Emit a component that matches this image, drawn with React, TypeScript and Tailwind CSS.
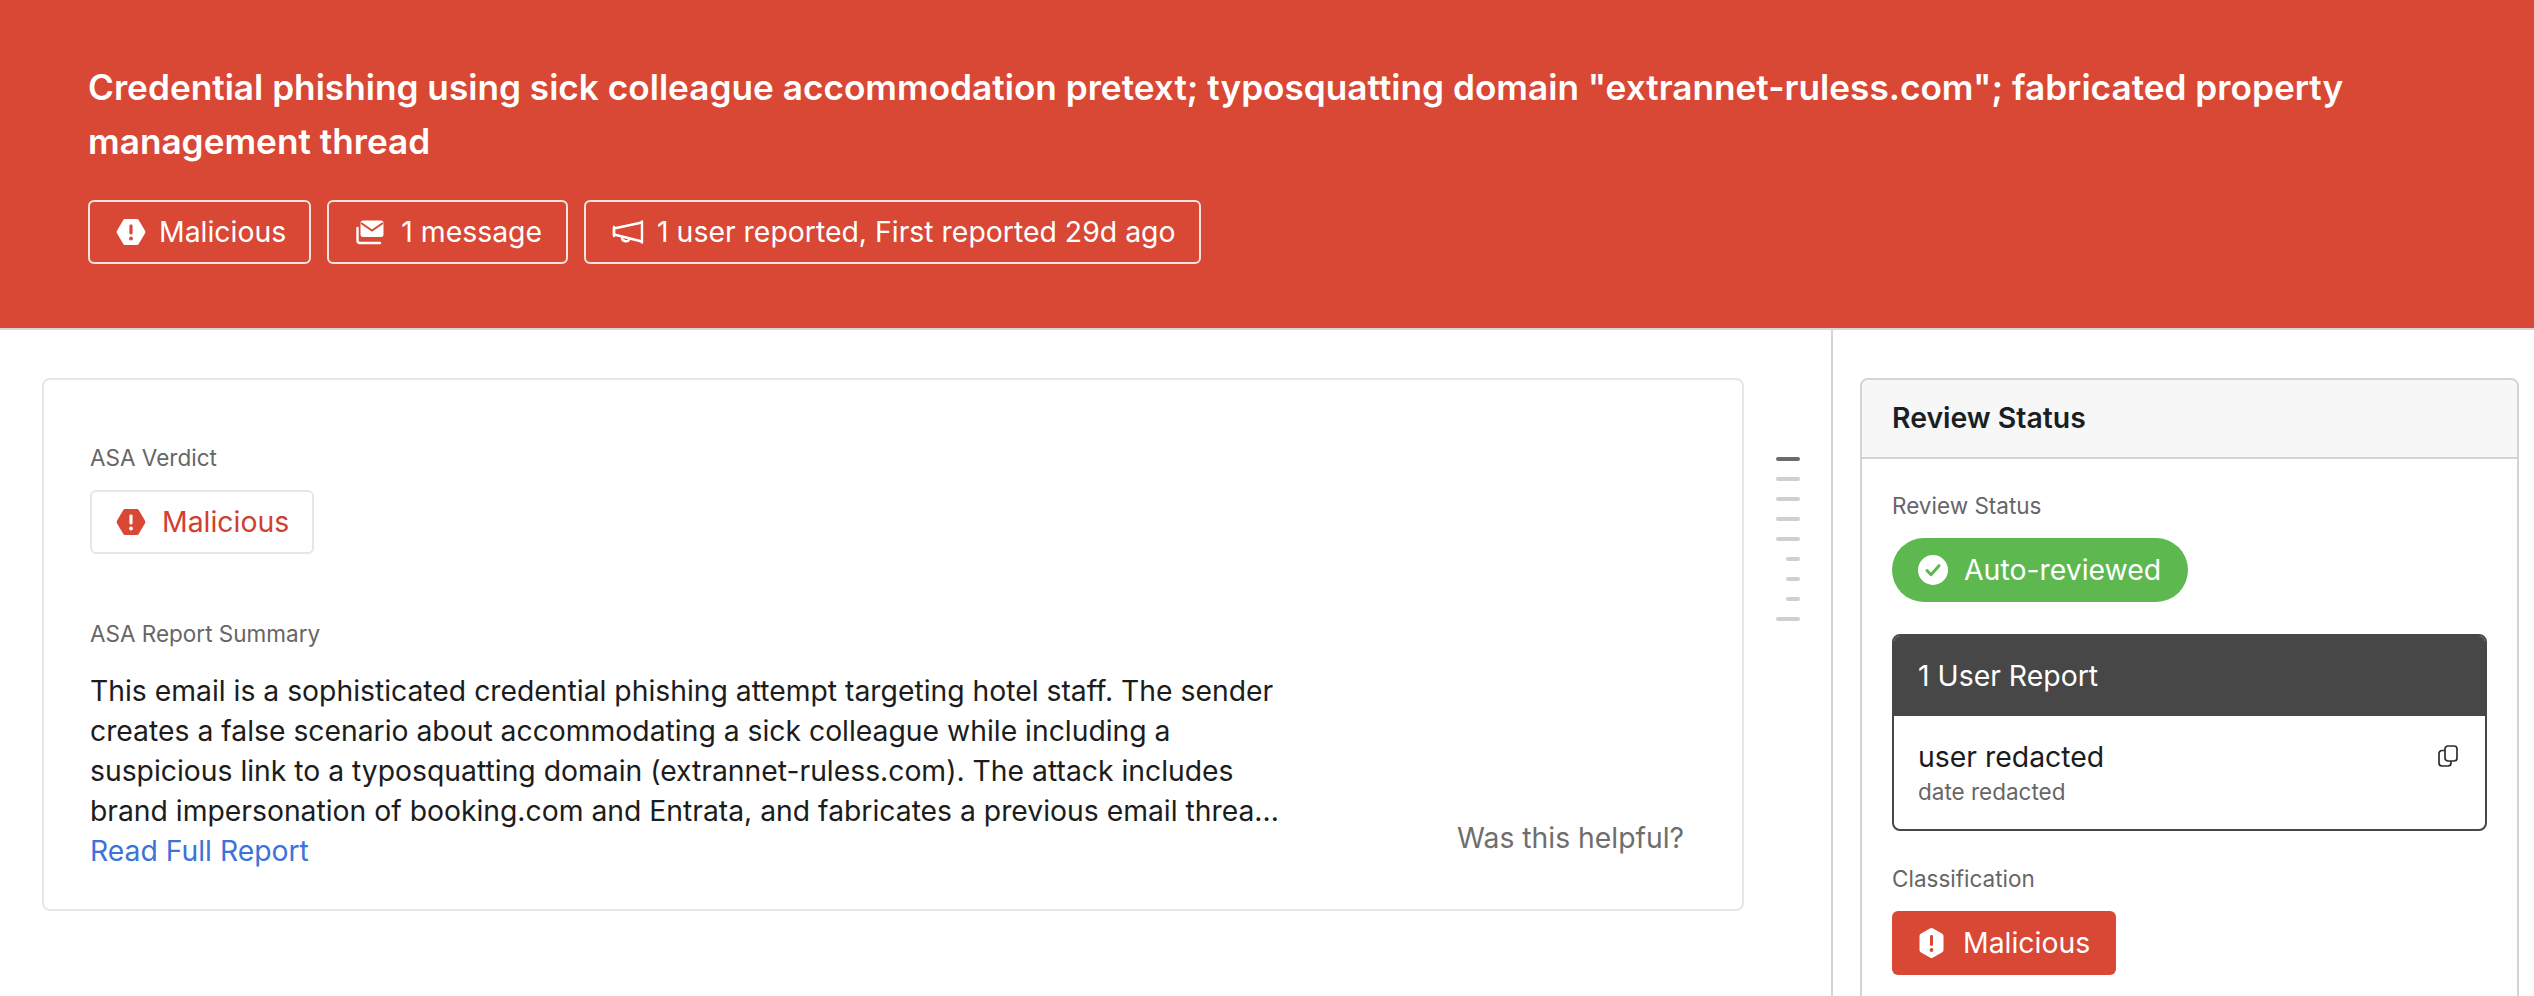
const font = { fontFamily: "Inter, 'Noto Sans', sans-serif" };

function HexAlert({ className, bang }: { className: string; bang: string }) {
  return (
    <svg viewBox="0 0 30 28" className={className}>
      <path
        d="M9 1h12a2 2 0 0 1 1.7 1l6.2 10.6a2.4 2.4 0 0 1 0 2.8L22.7 26a2 2 0 0 1-1.7 1H9a2 2 0 0 1-1.7-1L1.1 15.4a2.4 2.4 0 0 1 0-2.8L7.3 2A2 2 0 0 1 9 1z"
        fill="currentColor"
      />
      <rect x="13.4" y="6.5" width="3.2" height="10" rx="1.4" fill={bang} />
      <circle cx="15" cy="20.5" r="1.9" fill={bang} />
    </svg>
  );
}

function HexTall() {
  return (
    <svg viewBox="0 0 26 30" className="h-[30px] w-[27px] text-white">
      <path
        d="M11.4 0.6a3 3 0 0 1 3.2 0l9.2 5.2a2.6 2.6 0 0 1 1.2 2.2v14a2.6 2.6 0 0 1-1.2 2.2l-9.2 5.2a3 3 0 0 1-3.2 0l-9.2-5.2A2.6 2.6 0 0 1 1 22V8a2.6 2.6 0 0 1 1.2-2.2z"
        fill="currentColor"
      />
      <rect x="11.5" y="7" width="3" height="11" rx="1.4" fill="#d94735" />
      <circle cx="13" cy="22" r="1.9" fill="#d94735" />
    </svg>
  );
}

function MessageStack() {
  return (
    <svg viewBox="0 0 30 26" className="h-[26px] w-[30px]" fill="none">
      <path d="M8 1.5h18a2.5 2.5 0 0 1 2.5 2.5v11.500a2.500 2.500 0 0 1-2.5 2.5H8a2.500 2.500 0 0 1-2.500-2.500V4A2.500 2.500 0 0 1 8 1.500z" fill="white" />
      <path d="M6 4l11 7.5L28 4" stroke="#d94735" strokeWidth="2" />
      <path d="M2.5 9v12.5a2.5 2.5 0 0 0 2.5 2.500h20" stroke="white" strokeWidth="2.4" strokeLinecap="round" />
    </svg>
  );
}

function Megaphone() {
  return (
    <svg viewBox="0 0 32 24" className="h-[24px] w-[32px]" fill="none" stroke="white" strokeWidth="2.4">
      <path d="M30 1.5v21" strokeLinecap="round" />
      <path d="M30 2.5L2 8.5v6l28 7" strokeLinejoin="round" />
      <path d="M2 7v9" strokeLinecap="round" />
      <path d="M10 17a4 4 0 0 0 7.8 1.5" />
    </svg>
  );
}

function CopyIcon() {
  return (
    <svg viewBox="0 0 20 22" className="h-[22px] w-[20px]" fill="none" stroke="#2c2c2c" strokeWidth="1.7">
      <rect x="7" y="1" width="12" height="15" rx="3" />
      <path d="M7 5.5H4a3 3 0 0 0-3 3V18a3 3 0 0 0 3 3h6a3 3 0 0 0 3-3v-2" />
    </svg>
  );
}

function CheckCircle() {
  return (
    <svg viewBox="0 0 30 30" className="h-[30px] w-[30px]">
      <circle cx="15" cy="15" r="15" fill="white" />
      <path d="M9 15.5l4 4.2 8-9" fill="none" stroke="#5cb84f" strokeWidth="3" strokeLinecap="round" strokeLinejoin="round" />
    </svg>
  );
}

function Chip({ icon, label, className }: { icon: React.ReactNode; label: string; className: string }) {
  return (
    <div className={`flex h-[64px] items-center rounded-md border-2 border-white/85 pl-[26px] text-[28.4px] text-white ${className}`}>
      {icon}
      <span>{label}</span>
    </div>
  );
}

const dashes = [24, 24, 24, 24, 24, 14, 14, 14, 24];

export default function App() {
  return (
    <div className="flex h-[996px] flex-col overflow-hidden bg-white" style={font}>
      <header className="h-[330px] shrink-0 border-b-2 border-[#d8d6d2] bg-[#d94735] px-[88px] pt-[60px]">
        <h1 className="max-w-[2400px] text-[35.2px] leading-[54px] font-semibold text-white">
          Credential phishing using sick colleague accommodation pretext; typosquatting domain "extrannet-ruless.com"; fabricated property management thread
        </h1>
        <div className="mt-[32px] flex gap-[16px]">
          <Chip
            icon={<HexAlert className="h-[28px] w-[30px] text-white" bang="#d94735" />}
            label="Malicious"
            className="gap-[13px] pr-[23px]"
          />
          <Chip icon={<MessageStack />} label="1 message" className="gap-[16px] pr-[24px]" />
          <Chip
            icon={<Megaphone />}
            label="1 user reported, First reported 29d ago"
            className="gap-[13px] pr-[23px]"
          />
        </div>
      </header>

      <div className="flex flex-1">
        <main className="flex w-[1833px] shrink-0 items-start border-r-2 border-[#d4d4d4] pt-[48px] pl-[42px]">
          <section className="relative h-[533px] w-[1702px] rounded-lg border-2 border-[#e6e6e6] pt-[63px] pl-[46px]">
            <div className="text-[22.5px] leading-[30px] text-[#666666]">ASA Verdict</div>
            <div className="mt-[17px] flex h-[64px] w-[224px] items-center gap-[16px] rounded-md border-2 border-[#e6e6e6] pl-[24px] text-[28.4px] text-[#d0402f]">
              <HexAlert className="h-[28px] w-[30px] text-[#d94735]" bang="white" />
              <span>Malicious</span>
            </div>
            <div className="mt-[65px] text-[22.5px] leading-[30px] text-[#666666]">ASA Report Summary</div>
            <p className="mt-[22px] w-[1215px] text-[28.3px] leading-[40px] text-[#1c1c1c]">
              This email is a sophisticated credential phishing attempt targeting hotel staff. The sender creates a false scenario about accommodating a sick colleague while including a suspicious link to a typosquatting domain (extrannet-ruless.com). The attack includes brand impersonation of booking.com and Entrata, and fabricates a previous email threa...
            </p>
            <div className="text-[28.3px] leading-[40px] text-[#3b73d9]">Read Full Report</div>
            <div className="absolute right-[58px] bottom-[51px] text-[28.3px] leading-[40px] text-[#6e6e6e]">Was this helpful?</div>
          </section>
          <div className="mt-[79px] ml-[32px] flex w-[24px] flex-col items-end gap-[16px]">
            {dashes.map((w, i) => (
              <div
                key={i}
                className={`h-[4px] rounded-sm ${i === 0 ? "bg-[#6b6b6b]" : "bg-[#d0d0d0]"} ${w === 24 ? "w-[24px]" : "w-[14px]"}`}
              />
            ))}
          </div>
        </main>

        <aside className="flex-1 pt-[48px] pr-[15px] pl-[27px]">
          <div className="h-[700px] rounded-lg border-2 border-[#d4d4d4]">
            <div className="flex h-[79px] items-center rounded-t-lg border-b-2 border-[#d4d4d4] bg-[#f7f7f8] px-[30px] text-[28.4px] font-semibold text-[#1b1f24]">
              Review Status
            </div>
            <div className="px-[30px] pt-[32px]">
              <div className="text-[22.5px] leading-[30px] text-[#666666]">Review Status</div>
              <div className="mt-[17px] flex h-[64px] w-[296px] items-center gap-[16px] rounded-full bg-[#5cb84f] pl-[26px] text-[28.4px] text-white">
                <CheckCircle />
                <span>Auto-reviewed</span>
              </div>
              <div className="mt-[32px] overflow-hidden rounded-lg border-2 border-[#474747]">
                <div className="flex h-[80px] items-center bg-[#474747] px-[24px] text-[28.4px] text-white">1 User Report</div>
                <div className="flex h-[113px] items-start justify-between px-[24px] pt-[23px]">
                  <div>
                    <div className="text-[28.4px] leading-[36px] text-[#1c1c1c]">user redacted</div>
                    <div className="mt-[2px] text-[22.5px] leading-[30px] text-[#666666]">date redacted</div>
                  </div>
                  <div className="mt-[6px] mr-[3px]"><CopyIcon /></div>
                </div>
              </div>
              <div className="mt-[33px] text-[22.5px] leading-[30px] text-[#666666]">Classification</div>
              <div className="mt-[17px] flex h-[64px] w-[224px] items-center gap-[18px] rounded-md bg-[#d94735] pl-[26px] text-[28.4px] text-white">
                <HexTall />
                <span>Malicious</span>
              </div>
            </div>
          </div>
        </aside>
      </div>
    </div>
  );
}
